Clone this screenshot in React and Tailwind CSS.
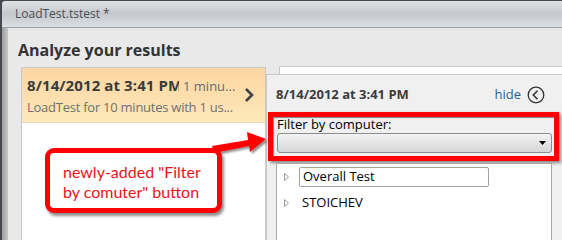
import React from "react";

const ui = { fontFamily: '"Open Sans", "Liberation Sans", sans-serif' };

function Chevron() {
  return (
    <svg width="12" height="16" viewBox="0 0 12 16" className="shrink-0">
      <polyline points="3,2 9,8 3,14" fill="none" stroke="#3f4246" strokeWidth="2.6" />
    </svg>
  );
}

function HideIcon() {
  return (
    <svg width="18" height="18" viewBox="0 0 18 18">
      <circle cx="9" cy="9" r="7.8" fill="none" stroke="#333" strokeWidth="1.3" />
      <polyline points="10.5,4.8 6.3,9 10.5,13.2" fill="none" stroke="#333" strokeWidth="1.6" />
    </svg>
  );
}

function Arrow() {
  return (
    <svg className="absolute inset-0 pointer-events-none" width="562" height="240">
      <defs>
        <filter id="sh" x="-20%" y="-20%" width="150%" height="150%">
          <feDropShadow dx="2" dy="2" stdDeviation="1.2" floodColor="#000" floodOpacity="0.45" />
        </filter>
      </defs>
      <polygon
        points="212,146 248,140 247,132 266,139 250,152 249,146 214,153"
        fill="#ff0000"
        filter="url(#sh)"
      />
    </svg>
  );
}

export default function App() {
  return (
    <div
      className="w-[562px] h-[240px] overflow-hidden relative bg-[#45484c] flex flex-col pt-px pl-[2px]"
      style={ui}
    >
      <div className="h-[27px] shrink-0 rounded-tl-[3px] bg-gradient-to-b from-[#dfe2e5] via-[#c4c8cc] to-[#dcdfe2] border-b border-[#9da1a6] flex items-center pl-[13px] text-[12px] text-[#4b4f56]">
        LoadTest.tstest *
      </div>
      <div className="flex-1 flex min-h-0">
        <div className="w-[6px] shrink-0 bg-gradient-to-r from-[#9e9e9e] to-[#c9c9c9]" />
        <div className="flex-1 min-w-0 bg-[#e9e9e9] flex flex-col pl-[10px] pt-[12px]">
          <h1 className="h-[20px] leading-[20px] text-[16px] font-bold text-[#333]">Analyze your results</h1>
          <div className="flex-1 flex mt-[7px] min-h-0">
            <div className="ml-[3px] w-[245px] shrink-0 border border-b-0 border-[#c9c9c9] bg-white flex flex-col">
              <div className="h-[55px] bg-gradient-to-b from-[#fdd6a2] to-[#fde8b9] border-b border-[#e6dcc4] flex items-center pl-[5px] pr-[10px]">
                <div className="flex-1 min-w-0">
                  <div className="flex items-baseline whitespace-nowrap leading-[22px]">
                    <span className="w-[152px] shrink-0 overflow-hidden font-bold text-[15px] tracking-[0.1px] text-[#3a3a3a]">
                      8/14/2012 at 3:41 PM
                    </span>
                    <span className="ml-[4px] text-[13px] text-[#6a6a6a]">1 minu...</span>
                  </div>
                  <div className="text-[13px] tracking-[-0.25px] leading-[20px] text-[#707070] whitespace-nowrap">
                    LoadTest for 10 minutes with 1 us...
                  </div>
                </div>
                <Chevron />
              </div>
            </div>
            <div className="flex-1 min-w-0 flex flex-col">
              <div className="h-[8px] shrink-0 -mt-px ml-[13px] bg-white border-l border-t border-[#c8c8c8]" />
              <div className="flex-1 min-h-0 bg-[#f0f0f0] border-l border-t border-[#c8c8c8] flex flex-col pt-[11px]">
                <div className="h-[18px] flex items-center justify-between pl-[9px] pr-[17px]">
                  <span className="text-[13px] font-bold text-[#3c3c3c]">8/14/2012 at 3:41 PM</span>
                  <span className="flex items-center gap-[6px]">
                    <span className="text-[13px] text-[#2f5d98]">hide</span>
                    <HideIcon />
                  </span>
                </div>
                <div className="mt-[8px] ml-px mr-[3px] border-[5px] border-[#ff0000] shadow-[2px_2px_3px_rgba(0,0,0,0.45),inset_1px_1px_1px_rgba(0,0,0,0.45)] pl-[4px] pr-[2px] pb-[3px]">
                  <div className="h-[14px] leading-[14px] text-[13px] text-black">Filter by computer:</div>
                  <div className="mt-[2px] h-[20px] rounded-[3px] border border-[#8b8c8d] bg-gradient-to-b from-[#f3f3f3] to-[#d6d6d6] flex items-center justify-end pr-[5px]">
                    <svg width="7" height="4" viewBox="0 0 7 4">
                      <polygon points="0,0 7,0 3.5,4" fill="#000" />
                    </svg>
                  </div>
                </div>
                <div className="mt-[2px] ml-[9px] mr-[10px] flex-1 bg-white border border-b-0 border-[#a8a8a8] pt-[3px]">
                  <div className="h-[20px] flex items-center pl-[7px]">
                    <svg width="5" height="8" viewBox="0 0 5 8" className="shrink-0">
                      <polygon points="0.5,0.5 4.5,4 0.5,7.5" fill="none" stroke="#9a9a9a" strokeWidth="1" />
                    </svg>
                    <div className="ml-[10px] w-[190px] h-[20px] border border-[#a0a0a0] rounded-[2px] pl-[3px] flex items-center text-[13px] text-black">
                      Overall Test
                    </div>
                  </div>
                  <div className="mt-[6px] h-[20px] flex items-center pl-[7px]">
                    <svg width="5" height="8" viewBox="0 0 5 8" className="shrink-0">
                      <polygon points="0.5,0.5 4.5,4 0.5,7.5" fill="none" stroke="#9a9a9a" strokeWidth="1" />
                    </svg>
                    <span className="ml-[13px] text-[13px] text-black">STOICHEV</span>
                  </div>
                </div>
              </div>
            </div>
          </div>
        </div>
      </div>

      <Arrow />
      <div
        className="absolute left-[45px] top-[148px] w-[177px] h-[65px] bg-white border-[5px] border-[#ff0000] rounded-[9px] shadow-[2px_3px_3px_rgba(0,0,0,0.45)] pl-[13px] pt-[9px] text-[16px] leading-[20px] text-[#e8141c]"
        style={{ fontFamily: 'Lato, "Open Sans", sans-serif' }}
      >
        newly-added "Filter
        <br />
        by comuter" button
      </div>
    </div>
  );
}
